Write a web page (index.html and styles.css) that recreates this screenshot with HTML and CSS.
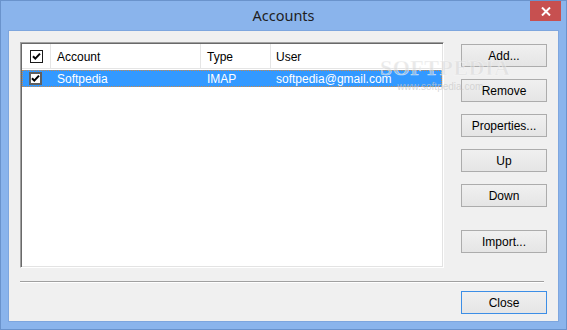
FILE: index.html
```html
<!DOCTYPE html>
<html>
<head>
<meta charset="utf-8">
<link rel="stylesheet" href="styles.css">
</head>
<body>
<div class="window">
  <div class="titlebar">
    <div></div>
    <div class="title">Accounts</div>
    <div class="tb-right">
      <button class="tb-close" aria-label="Close">
        <svg width="10" height="9" viewBox="0 0 10 9"><path d="M1 0.5 L9 8.5 M9 0.5 L1 8.5" stroke="#fff" stroke-width="2" fill="none"/></svg>
      </button>
    </div>
  </div>
  <div class="client">
    <div class="main">
      <div class="list">
        <div class="lv-row lv-header">
          <div class="cell cb-cell"><span class="cb"><svg width="11" height="11" viewBox="0 0 11 11"><path d="M2 5.2 L4.3 7.6 L9 2.6" stroke="#000" stroke-width="2" fill="none"/></svg></span></div>
          <div class="cell hcell">Account</div>
          <div class="cell hcell">Type</div>
          <div class="cell hcell user">User</div>
        </div>
        <div class="lv-row lv-item selected">
          <div class="cell cb-cell"><span class="cb cb-item"><svg width="9" height="9" viewBox="0 0 9 9"><path d="M1 4.2 L3.3 6.6 L8 1.6" stroke="#000" stroke-width="2" fill="none"/></svg></span></div>
          <div class="cell icell">Softpedia</div>
          <div class="cell icell">IMAP</div>
          <div class="cell icell user">softpedia@gmail.com</div>
        </div>
      </div>
      <div class="buttons">
        <button class="btn">Add...</button>
        <button class="btn">Remove</button>
        <button class="btn">Properties...</button>
        <button class="btn">Up</button>
        <button class="btn">Down</button>
        <button class="btn btn-gap">Import...</button>
      </div>
    </div>
    <div class="separator"></div>
    <div class="footer">
      <button class="btn btn-default">Close</button>
    </div>
    <div class="watermark">
      <div class="wm-big">SOFTPEDIA</div>
      <div class="wm-small">www.softpedia.com</div>
    </div>
  </div>
</div>
</body>
</html>
```
FILE: styles.css
```css
* { box-sizing: border-box; }
html, body { margin: 0; padding: 0; }
body {
  width: 567px;
  height: 330px;
  overflow: hidden;
  font-family: "Liberation Sans", Arial, sans-serif;
  font-size: 12px;
  color: #000;
}
.window {
  width: 567px;
  height: 330px;
  background: #8ab4ec;
  border: 1px solid #6a93cc;
  display: flex;
  flex-direction: column;
}
.titlebar {
  height: 29px;
  display: grid;
  grid-template-columns: 1fr auto 1fr;
  align-items: start;
}
.title {
  font-family: "Noto Sans", "Open Sans", sans-serif;
  font-size: 14.5px;
  color: #1e1e1e;
  line-height: 29px;
}
.tb-right {
  display: flex;
  justify-content: flex-end;
}
.tb-close {
  width: 31px;
  height: 20px;
  margin: 0 5px 0 0;
  padding: 0;
  border: none;
  background: #c75050;
  display: flex;
  align-items: center;
  justify-content: center;
}
.client {
  position: relative;
  margin: 0 7px 7px 7px;
  height: 292px;
  background: #f0f0f0;
  box-shadow: inset 0 0 0 1px #7ea6de;
  padding: 12px 12px 0 12px;
}
.main {
  display: flex;
  gap: 17px;
}
.list {
  width: 424px;
  height: 226px;
  background: #fff;
  border: 1px solid;
  border-color: #a0a0a0 #ffffff #ffffff #a0a0a0;
  box-shadow: inset 1px 1px 0 #696969, inset -1px -1px 0 #e3e3e3;
  padding: 1px;
}
.lv-row {
  display: grid;
  grid-template-columns: 28px 150px 70px 1fr;
}
.lv-header {
  height: 25px;
  border-bottom: 1px solid #e5e5e5;
  align-items: stretch;
}
.cell {
  display: flex;
  align-items: center;
  white-space: nowrap;
}
.hcell {
  border-left: 1px solid #e5e5e5;
  padding-left: 6px;
  padding-top: 2px;
  color: #000;
}
.hcell.user { padding-left: 5px; }
.cb-cell { padding-left: 8px; }
.cb {
  width: 13px;
  height: 13px;
  border: 1px solid #1a1a1a;
  background: #fff;
  display: flex;
  align-items: center;
  justify-content: center;
}
.lv-item {
  height: 17px;
  margin-top: 1px;
}
.selected {
  background: #3399ff;
  color: #fff;
  outline: 1px dotted #c8884a;
  outline-offset: -1px;
}
.lv-item .cb-cell { padding-left: 7px; }
.cb-item {
  border: 2px solid #5f5f5f;
}
.icell { padding-left: 7px; }
.icell.user { padding-left: 6px; }
.buttons {
  display: flex;
  flex-direction: column;
  gap: 12px;
  margin-top: 2px;
  width: 86px;
}
.btn {
  width: 86px;
  height: 23px;
  font-family: "Liberation Sans", Arial, sans-serif;
  font-size: 12px;
  color: #000;
  border: 1px solid #acacac;
  background: linear-gradient(#f0f0f0, #e5e5e5);
  padding: 0;
}
.btn-gap { margin-top: 11px; }
.btn-default {
  border-color: #3c8ee6;
}
.separator {
  margin-top: 13px;
  width: 524px;
  height: 2px;
  border-top: 1px solid #a0a0a0;
  border-bottom: 1px solid #ffffff;
}
.footer {
  margin-top: 8px;
  display: flex;
  justify-content: flex-end;
}
.watermark {
  position: absolute;
  left: 372px;
  top: 25px;
  pointer-events: none;
  text-align: center;
}
.wm-big {
  font-family: "Liberation Serif", serif;
  font-weight: bold;
  font-size: 22px;
  letter-spacing: 0.5px;
  color: rgba(215, 215, 215, 0.55);
  -webkit-text-stroke: 0.5px rgba(255,255,255,0.6);
}
.wm-small {
  font-family: "Liberation Sans", sans-serif;
  font-size: 10px;
  color: rgba(200, 200, 200, 0.7);
  margin-left: -10px;
}
```
